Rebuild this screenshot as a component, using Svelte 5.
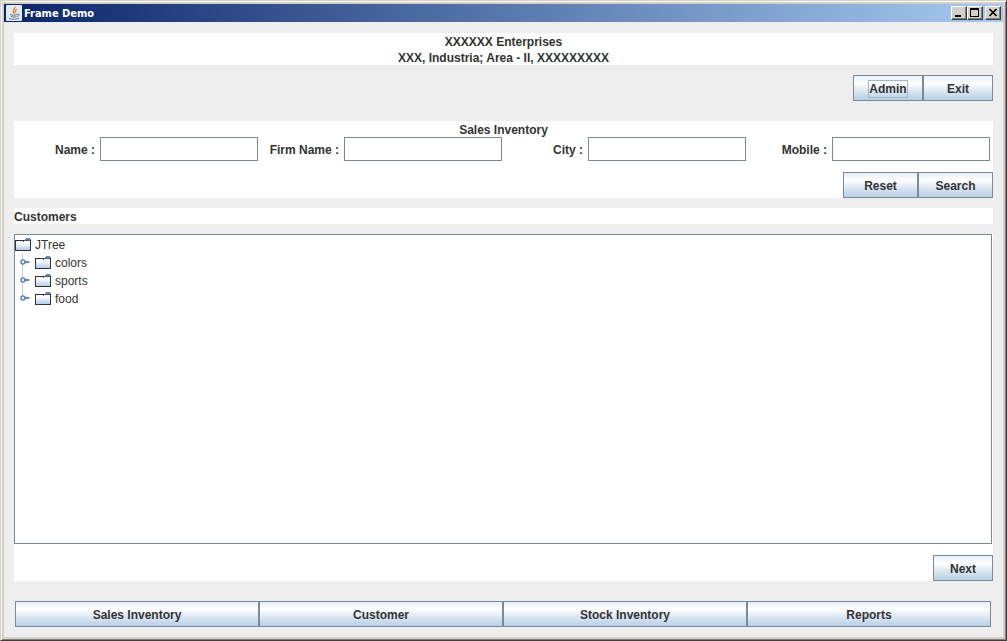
<script lang="ts">
	const fields = [
		{ id: 'name', label: 'Name :' },
		{ id: 'firm', label: 'Firm Name :' },
		{ id: 'city', label: 'City :' },
		{ id: 'mobile', label: 'Mobile :' }
	];
	const sections = ['Sales Inventory', 'Customer', 'Stock Inventory', 'Reports'];
	const nodes = ['colors', 'sports', 'food'];

	let values = $state<Record<string, string>>({ name: '', firm: '', city: '', mobile: '' });

	function reset() {
		values = { name: '', firm: '', city: '', mobile: '' };
	}
</script>

{#snippet folder()}
	<svg class="folder" width="16" height="14" viewBox="0 0 16 14" shape-rendering="crispEdges" aria-hidden="true">
		<path d="M1 3H9L10 3H15V12H1Z" fill="url(#folder-fill)" />
		<path d="M9 2L11 0H15V1H16V2Z" fill="#6382bf" />
		<path d="M0 2H9V3H1V12H15V2H16V13H0Z" fill="#333" />
		<path d="M8 3H9V2H15V3H9V4H8Z" fill="#47597a" />
	</svg>
{/snippet}

<div class="window">
	<svg class="defs" width="0" height="0" aria-hidden="true">
		<linearGradient id="folder-fill" x1="0" y1="0" x2="0" y2="1">
			<stop offset="0.2" stop-color="#fff" />
			<stop offset="1" stop-color="#b0cde8" />
		</linearGradient>
	</svg>

	<header class="titlebar">
		<svg class="java" width="16" height="16" viewBox="0 0 16 16" aria-hidden="true">
			<rect width="16" height="16" rx="1" fill="#e4e8f0" />
			<path d="M9 2C9.5 4.5 5.5 5 7.5 8.5M11 4.5C8.5 5.5 9.5 6.5 8.5 8.5" fill="none" stroke="#e8821e" stroke-width="1.3" />
			<path d="M4 9.5C6 10.5 9 10.5 11 9.5M5 11.5C7 12.2 9 12.2 10.5 11.5M11 9C14 8.5 13.5 11 11 11.5M3 13.5C6 14.6 11 14.5 13 13" fill="none" stroke="#5b7697" />
		</svg>
		<span class="caption">Frame Demo</span>
		<button class="control" aria-label="Minimize">
			<svg width="14" height="12" viewBox="0 0 14 12" shape-rendering="crispEdges"><path d="M3 8H9V10H3Z" /></svg>
		</button>
		<button class="control" aria-label="Maximize">
			<svg width="14" height="12" viewBox="0 0 14 12" shape-rendering="crispEdges"><path d="M2 1H11V10H2ZM3 3V9H10V3Z" fill-rule="evenodd" /></svg>
		</button>
		<button class="control close" aria-label="Close">
			<svg width="14" height="12" viewBox="0 0 14 12"><path d="M3.5 2L10.5 9M10.5 2L3.5 9" stroke="#000" stroke-width="1.7" /></svg>
		</button>
	</header>

	<main>
		<div class="company">
			<div>XXXXXX Enterprises</div>
			<div>XXX, Industria; Area - II, XXXXXXXXX</div>
		</div>

		<div class="actions top">
			<button class="metal"><span class="focus">Admin</span></button>
			<button class="metal">Exit</button>
		</div>

		<section class="search">
			<div class="heading">Sales Inventory</div>
			<div class="fields">
				{#each fields as field}
					<div class="field">
						<label for={field.id}>{field.label}</label>
						<input id={field.id} type="text" bind:value={values[field.id]} />
					</div>
				{/each}
			</div>
			<div class="actions find">
				<button class="metal" onclick={reset}>Reset</button>
				<button class="metal">Search</button>
			</div>
		</section>

		<div class="customers">Customers</div>

		<section class="list">
			<div class="tree">
				<div class="node">{@render folder()}<span>JTree</span></div>
				<ul>
					{#each nodes as node, i}
						<li class="node">
							<svg class="handle" width="20" height="18" viewBox="0 0 20 18" aria-hidden="true">
								<path d={i === nodes.length - 1 ? 'M7.5 0V9' : 'M7.5 0V18'} stroke="#b8cfe5" />
								<path d="M10 9H14" stroke="#6382bf" stroke-width="2" />
								<path d="M14 9H16" stroke="#b8cfe5" />
								<circle cx="8" cy="9" r="2" fill="#fff" stroke="#6382bf" stroke-width="1.6" />
							</svg>
							{@render folder()}<span>{node}</span>
						</li>
					{/each}
				</ul>
			</div>
			<div class="actions next">
				<button class="metal">Next</button>
			</div>
		</section>

		<nav>
			{#each sections as section}
				<button class="metal">{section}</button>
			{/each}
		</nav>
	</main>
</div>

<style>
	:global(body) {
		margin: 0;
	}

	.window {
		display: flex;
		flex-direction: column;
		box-sizing: border-box;
		min-height: 100vh;
		padding: 3px;
		border: 1px solid #d4d0c8;
		border-right-color: #404040;
		border-bottom-color: #404040;
		box-shadow: inset 1px 1px #fff, inset -1px -1px #808080, inset 0 0 0 3px #d4d0c8;
		background: #eee;
		color: #333;
		font: bold 12px/16px "Liberation Sans", Arial, sans-serif;
	}

	.defs {
		position: absolute;
	}

	.titlebar {
		display: flex;
		align-items: center;
		height: 18px;
		padding: 0 2px;
		background: linear-gradient(to right, #0a246a, #a6caf0);
	}

	.caption {
		flex: 1;
		padding: 1px 0 0 2px;
		color: #fff;
		font: bold 11px/16px Tahoma, "DejaVu Sans Condensed", sans-serif;
	}

	.control {
		display: block;
		box-sizing: border-box;
		width: 16px;
		height: 14px;
		padding: 0;
		border: 1px solid;
		border-color: #fff #404040 #404040 #fff;
		box-shadow: inset -1px -1px #808080;
		background: #d4d0c8;
	}

	.control svg {
		display: block;
	}

	.close {
		margin-left: 2px;
	}

	main {
		display: flex;
		flex: 1;
		flex-direction: column;
		padding: 11px 10px 10px;
	}

	.company,
	.heading {
		text-align: center;
	}

	.company,
	.heading,
	.customers {
		box-sizing: border-box;
		height: 16px;
		padding-top: 1px;
	}

	.company {
		height: 32px;
	}

	.company,
	.search,
	.customers,
	.list {
		background: #fff;
	}

	.actions {
		display: flex;
		justify-content: flex-end;
	}

	.metal {
		box-sizing: border-box;
		height: 26px;
		padding: 2px 0 0;
		border: 1px solid #7a8a99;
		background: linear-gradient(#e6eef6, #fff 30%, #dde8f3 60%, #b8cfe5);
		color: #333;
		font: inherit;
	}

	.focus {
		display: inline-block;
		outline: 1px solid #a3b8cc;
	}

	.top {
		margin: 10px 0 20px;
	}

	.top .metal {
		width: 70px;
	}

	.fields {
		display: grid;
		grid-template-columns: repeat(4, 1fr);
		padding: 0 2px 0 1px;
	}

	.field {
		display: flex;
		align-items: center;
		justify-content: flex-end;
		gap: 5px;
		padding-right: 1px;
	}

	label,
	.node span {
		padding-top: 2px;
	}

	.field input {
		box-sizing: border-box;
		width: 158px;
		height: 24px;
		padding: 0 3px;
		border: 1px solid #7a8a99;
		background: #fff;
		font: 12px "Liberation Sans", Arial, sans-serif;
	}

	.find {
		margin-top: 11px;
	}

	.find .metal {
		width: 75px;
	}

	.customers {
		margin: 10px 0;
	}

	.list {
		display: flex;
		flex: 1;
		flex-direction: column;
	}

	.tree {
		flex: 1;
		margin-right: 1px;
		border: 1px solid #7a8a99;
		font-weight: normal;
	}

	ul {
		margin: 0;
		padding: 0;
		list-style: none;
	}

	.node {
		display: flex;
		align-items: center;
		height: 18px;
	}

	.folder {
		margin: 2px 4px 0 0;
	}

	.next {
		margin-top: 11px;
	}

	.next .metal {
		width: 60px;
	}

	nav {
		display: grid;
		grid-template-columns: repeat(4, 1fr);
		margin-top: 20px;
		padding: 0 2px 0 1px;
	}
</style>
